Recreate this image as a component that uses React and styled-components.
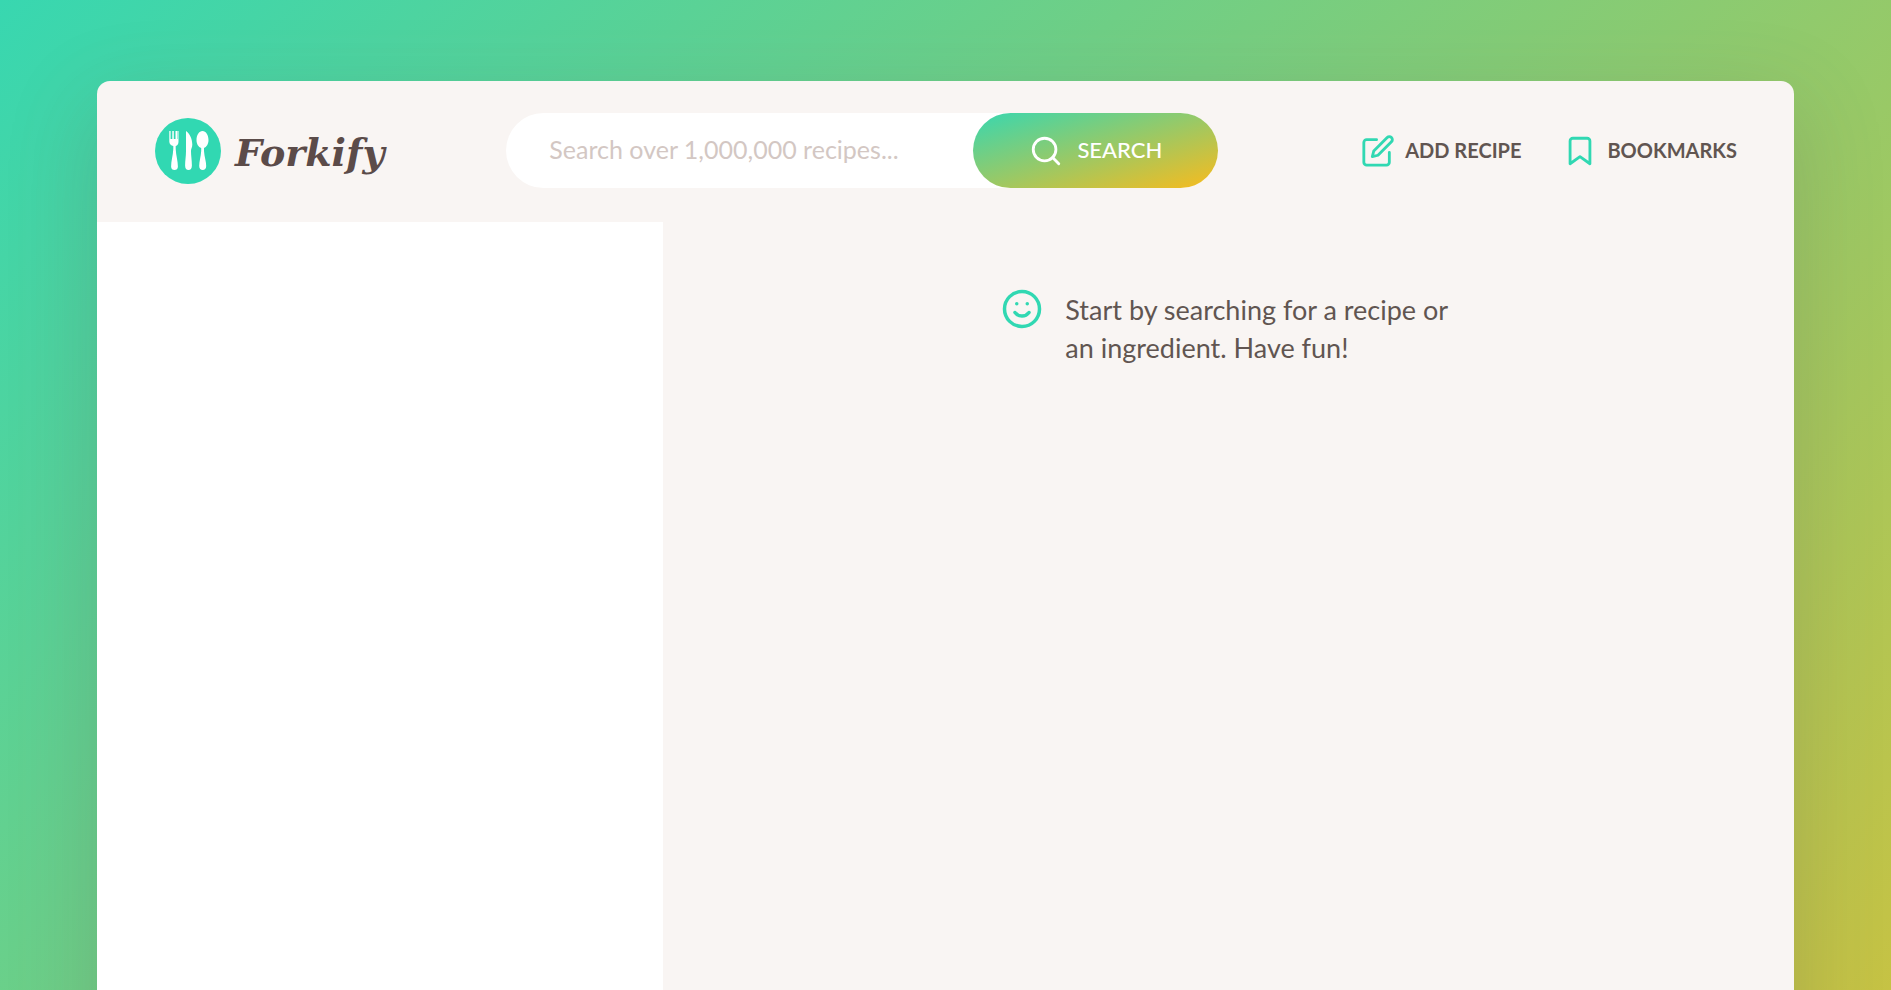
import React from 'react';
import styled, { createGlobalStyle } from 'styled-components';

const teal = '#31d8b2';
const ink = '#615551';
const gradient = 'linear-gradient(to right bottom, #38d7b0, #f9bb1d)';

const GlobalStyle = createGlobalStyle`
  *, *::before, *::after { box-sizing: border-box; }
  body {
    margin: 0;
    padding: 81px 24px;
    background: linear-gradient(to right bottom, #38d7b0, #f9bb1d 105%) no-repeat;
    color: ${ink};
    font-family: Lato, "Open Sans", sans-serif;
    font-weight: 400;
    line-height: 1.5;
  }
`;

const Container = styled.div`
  max-width: 1697px;
  min-height: 1654px;
  margin: 0 auto;
  display: flex;
  flex-direction: column;
  overflow: hidden;
  border-radius: 13px;
  background: #f9f5f3;
  box-shadow: 0 28px 85px 7px rgba(97, 85, 81, 0.2);
`;

const Header = styled.header`
  min-height: 141px;
  padding: 0 36px 2px 58px;
  display: flex;
  align-items: center;
  justify-content: space-between;
`;

const Logo = styled.a`
  display: flex;
  align-items: center;
  gap: 14px;
  color: #5b4b49;
  text-decoration: none;
`;

const LogoMark = styled.svg`
  width: 66px;
  height: 66px;
  flex: none;
`;

const LogoName = styled.span`
  padding-top: 4px;
  font: italic 700 38px/48px "DejaVu Serif", serif;
`;

const SearchForm = styled.form`
  display: flex;
  border-radius: 38px;
  background: #fff;
`;

const SearchInput = styled.input`
  width: 467px;
  min-width: 0;
  padding: 0 0 2px 43px;
  border: 0;
  outline: 0;
  background: none;
  color: inherit;
  font: inherit;
  font-size: 25px;
  &::placeholder { color: #d3c7c3; opacity: 1; }
`;

const SearchButton = styled.button`
  width: 245px;
  height: 75px;
  padding: 0;
  flex: none;
  display: flex;
  align-items: center;
  justify-content: center;
  gap: 14px;
  border: 0;
  border-radius: 38px;
  background: ${gradient};
  color: #fff;
  font: inherit;
  font-size: 22px;
  font-weight: 500;
  text-transform: uppercase;
  cursor: pointer;
`;

const Nav = styled.nav`
  display: flex;
`;

const NavButton = styled.button`
  height: 139px;
  padding: 0 21px;
  display: flex;
  align-items: center;
  gap: 10px;
  border: 0;
  background: none;
  color: inherit;
  font: inherit;
  font-size: 20px;
  font-weight: 700;
  text-transform: uppercase;
  white-space: nowrap;
  cursor: pointer;
`;

const ButtonLabel = styled.span`
  padding-bottom: 2px;
`;

const Icon = styled.svg`
  width: ${(p) => p.$size}px;
  height: ${(p) => p.$size}px;
  flex: none;
  fill: none;
  stroke: ${(p) => p.$color || teal};
  stroke-width: 2;
  stroke-linecap: round;
  stroke-linejoin: round;
`;

const Main = styled.main`
  flex: 1;
  display: grid;
  grid-template-columns: 1fr 2fr;
`;

const Results = styled.aside`
  background: #fff;
`;

const Recipe = styled.section`
  padding: 66px 56px;
`;

const Message = styled.div`
  max-width: 454px;
  margin: 0 auto;
  display: flex;
  align-items: flex-start;
  gap: 22px;
`;

const MessageText = styled.p`
  margin: 0;
  padding-top: 3px;
  font-size: 27px;
  line-height: 38px;
`;

export default function App() {
  return (
    <>
      <GlobalStyle />
      <Container>
        <Header>
          <Logo href="#">
            <LogoMark viewBox="0 0 66 66" aria-hidden="true">
              <circle cx="33" cy="33" r="33" fill={teal} />
              <g fill="#fff">
                <path d="M14.300 13h1.300v8h1.700v-8h1.500v8h1.700v-8h1.500v8h.4v-8h1.100v10.500c0 2.500-1 4-2.800 4.500v3c.4 7 2.200 12 2.200 17.500 0 2.500-1.400 3.500-3.400 3.500s-3.400-1-3.400-3.500c0-5.500 1.800-10.500 2.200-17.500v-3c-2.300-.5-4-2-4-4.500z" />
                <path d="M31 13c3.500 2 6.300 8 6.300 13.500 0 3-1.300 4-1.300 6.500 0 5 .9 9 .9 14.500 0 3-1.300 4.500-3.400 4.500s-3.400-1.500-3.400-4.500c0-5 .9-9 .9-14.500z" />
                <path d="M47.500 13c3.500 0 6 4 6 9 0 4-2 7-4.500 8v3c.4 6 2.200 10 2.200 15 0 2.500-1.500 4-3.500 4s-3.500-1.500-3.500-4c0-5 1.600-9 2-15v-3c-2.700-1-4.700-4-4.700-8 0-5 2.500-9 6-9z" />
              </g>
            </LogoMark>
            <LogoName>Forkify</LogoName>
          </Logo>

          <SearchForm role="search" onSubmit={(e) => e.preventDefault()}>
            <SearchInput
              type="text"
              aria-label="Search recipes"
              placeholder="Search over 1,000,000 recipes..."
            />
            <SearchButton type="submit">
              <Icon $size={34} $color="#fff" viewBox="0 0 24 24" aria-hidden="true">
                <circle cx="11" cy="11" r="8" />
                <path d="M21 21l-4.350-4.350" />
              </Icon>
              <ButtonLabel>Search</ButtonLabel>
            </SearchButton>
          </SearchForm>

          <Nav>
            <NavButton type="button">
              <Icon $size={34} viewBox="0 0 24 24" aria-hidden="true">
                <path d="M11 4H4a2 2 0 0 0-2 2v14a2 2 0 0 0 2 2h14a2 2 0 0 0 2-2v-7" />
                <path d="M18.500 2.500a2.121 2.121 0 0 1 3 3L12 15l-4 1 1-4z" />
              </Icon>
              <ButtonLabel>Add recipe</ButtonLabel>
            </NavButton>
            <NavButton type="button">
              <Icon $size={34} viewBox="0 0 24 24" aria-hidden="true">
                <path d="M19 21l-7-5-7 5V5a2 2 0 0 1 2-2h10a2 2 0 0 1 2 2z" />
              </Icon>
              <ButtonLabel>Bookmarks</ButtonLabel>
            </NavButton>
          </Nav>
        </Header>

        <Main>
          <Results />
          <Recipe>
            <Message>
              <Icon $size={42} viewBox="0 0 24 24" aria-hidden="true">
                <circle cx="12" cy="12" r="10" />
                <path d="M8 14s1.500 2 4 2 4-2 4-2M9 9h.01M15 9h.01" />
              </Icon>
              <MessageText>Start by searching for a recipe or an ingredient. Have fun!</MessageText>
            </Message>
          </Recipe>
        </Main>
      </Container>
    </>
  );
}
